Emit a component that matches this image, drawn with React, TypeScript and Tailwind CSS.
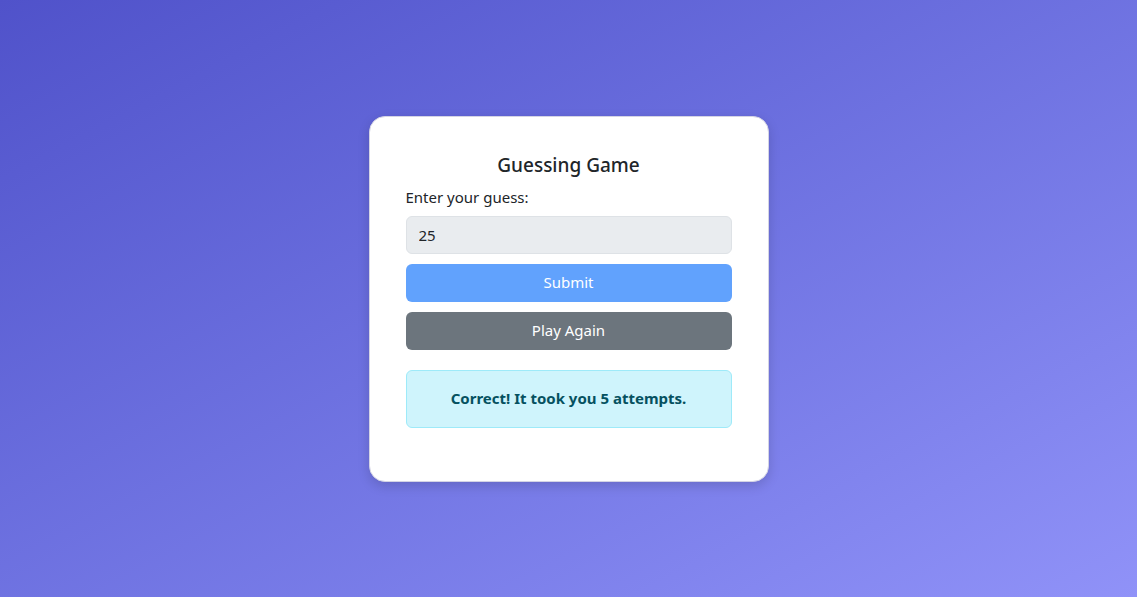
import React, { useState } from "react";

export default function App() {
  const [guess, setGuess] = useState("25");

  return (
    <div
      className="min-h-screen w-full flex items-center justify-center bg-gradient-to-br from-[#5052ca] to-[#9092f8]"
      style={{ fontFamily: '"Noto Sans", "Open Sans", sans-serif' }}
    >
      <div className="w-[400px] bg-white rounded-2xl border border-[#d4d4e4] shadow-[0_4px_12px_rgba(0,0,0,0.15)] px-[36px] pt-[36px] pb-[53px] text-[#212529]">
        <h2 className="text-center text-[19px] leading-[24px] font-medium mb-[8px]">Guessing Game</h2>
        <label className="block text-[15px] leading-[24px] mb-[7px]">Enter your guess:</label>
        <input
          type="number"
          value={guess}
          onChange={(e) => setGuess(e.target.value)}
          className="block w-full h-[38px] px-[12px] text-[15px] bg-[#e9ecef] border border-[#dee2e6] rounded-md outline-none text-[#212529]"
        />
        <button className="mt-[10px] w-full h-[38px] rounded-md bg-[#61a2fd] text-white text-[15px]">Submit</button>
        <button className="mt-[10px] w-full h-[38px] rounded-md bg-[#6c757d] text-white text-[15px]">Play Again</button>
        <div className="mt-[20px] h-[58px] flex items-center justify-center rounded-md bg-[#cff4fc] border border-[#9eeaf9] text-[#055160] text-[15px] font-bold">
          Correct! It took you 5 attempts.
        </div>
      </div>
    </div>
  );
}
